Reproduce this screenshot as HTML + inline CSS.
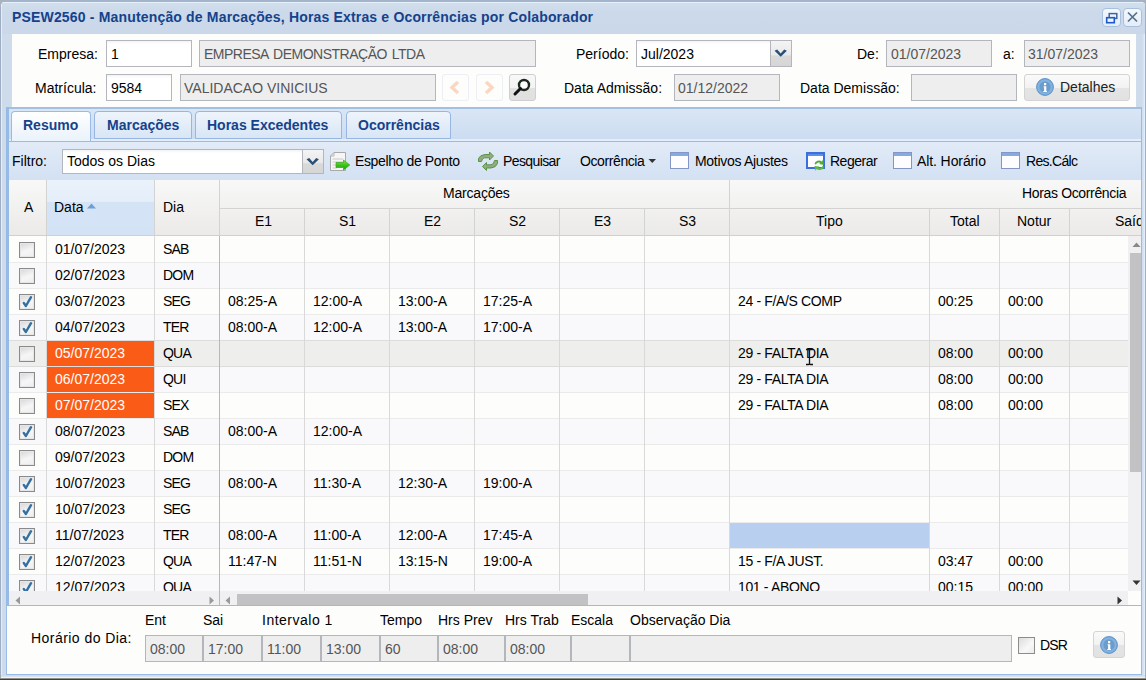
<!DOCTYPE html><html><head><meta charset="utf-8"><style>
html,body{margin:0;padding:0;}
body{width:1146px;height:680px;overflow:hidden;position:relative;background:#cedbeb;font-family:"Liberation Sans",sans-serif;font-size:14px;}
.t{position:absolute;line-height:16px;white-space:nowrap;}
.b{position:absolute;box-sizing:border-box;}
</style></head><body>
<div class="b" style="left:0px;top:0px;width:1146px;height:2px;background:#a3b4cb"></div>
<div class="b" style="left:0px;top:0px;width:1px;height:680px;background:#9fadc4"></div>
<div class="b" style="left:1145px;top:0px;width:1px;height:680px;background:#a0aec4"></div>
<div class="b" style="left:1px;top:2px;width:1144px;height:1px;background:#e4f1fc"></div>
<div class="b" style="left:1px;top:3px;width:1px;height:676px;background:#e4eefa"></div>
<div class="b" style="left:1142px;top:3px;width:3px;height:676px;background:linear-gradient(90deg,#cddcef,#d5e3f5,#e8f2fc)"></div>
<div class="b" style="left:0px;top:679px;width:1146px;height:1px;background:#6f7478"></div>
<svg style="position:absolute;left:0;top:0" width="7" height="7"><path d="M0 7 V0 H7 V1.5 H5 Q1.5 1.5 1.5 5 V7 Z" fill="#a9b3c0"/><path d="M1.5 7 V5 Q1.5 2.5 5 2.5 H7" fill="none" stroke="#e6f2fc" stroke-width="1"/></svg>
<svg style="position:absolute;left:1139px;top:0" width="7" height="7"><path d="M7 7 V0 H0 V1.5 H2 Q5.5 1.5 5.5 5 V7 Z" fill="#a9b3c0"/></svg>
<div class="b" style="left:2px;top:3px;width:1143px;height:31px;background:linear-gradient(#d2deec,#cbd9ea 30%,#cad8ea)"></div>
<div class="t" style="left:12px;top:9px;color:#15428b;font-weight:bold;letter-spacing:0.17px">PSEW2560 - Manutenção de Marcações, Horas Extras e Ocorrências por Colaborador</div>
<div class="b" style="left:1102px;top:8px;width:19px;height:19px;border:1px solid #a9c0dd;border-radius:4px;background:linear-gradient(#f4f8fd,#e3edf8)"></div>
<div class="b" style="left:1123px;top:8px;width:19px;height:19px;border:1px solid #a9c0dd;border-radius:4px;background:linear-gradient(#f4f8fd,#e3edf8)"></div>
<svg style="position:absolute;left:1102px;top:8px" width="19" height="19"><rect x="7.2" y="5.6" width="7.6" height="4.8" fill="none" stroke="#3a64a8" stroke-width="1.5"/><rect x="4.7" y="9.7" width="7.6" height="5" fill="#eef4fb" stroke="#1d5ac4" stroke-width="1.6"/></svg>
<svg style="position:absolute;left:1123px;top:8px" width="19" height="19"><path d="M5 4.5 L14 13.5 M14 4.5 L5 13.5" stroke="#52708c" stroke-width="1.7"/></svg>
<div class="b" style="left:12px;top:34px;width:1124px;height:73px;background:#fdfdfb"></div>
<div class="t" style="left:38px;top:46px;color:#000;font-weight:normal;">Empresa:</div>
<div class="b" style="left:106px;top:40px;width:86px;height:27px;border:1px solid #b4b6bd;background:linear-gradient(#f3f3f3 0,#fff 3px,#fff)"></div>
<div class="t" style="left:111px;top:46px;color:#000;font-weight:normal;">1</div>
<div class="b" style="left:199px;top:40px;width:337px;height:27px;border:1px solid #b4b6bd;background:#eeeeef"></div>
<div class="t" style="left:204px;top:46px;color:#555;font-weight:normal;letter-spacing:-0.5px;word-spacing:1.5px">EMPRESA DEMONSTRAÇÃO LTDA</div>
<div class="t" style="left:576px;top:46px;color:#000;font-weight:normal;">Período:</div>
<div class="b" style="left:636px;top:40px;width:156px;height:27px;border:1px solid #b4b6bd;background:linear-gradient(#f3f3f3 0,#fff 3px,#fff)"></div>
<div class="t" style="left:641px;top:46px;color:#000;font-weight:normal;">Jul/2023</div>
<div class="b" style="left:770px;top:41px;width:21px;height:25px;background:linear-gradient(#f4f4f4 0,#e9e9e9 55%,#d9d9d9 60%,#d6d6d6);border-left:1px solid #b4b6bd"></div>
<svg style="position:absolute;left:770px;top:41px" width="21" height="25"><path d="M4.5 9.8 L7.2 8.6 L10.7 12.4 L14.2 8.6 L16.9 9.8 L10.7 15.8 Z" fill="#2a4f78"/></svg>
<div class="t" style="left:857px;top:46px;color:#000;font-weight:normal;">De:</div>
<div class="b" style="left:886px;top:40px;width:106px;height:27px;border:1px solid #b4b6bd;background:#eeeeef"></div>
<div class="t" style="left:891px;top:46px;color:#555;font-weight:normal;">01/07/2023</div>
<div class="t" style="left:1003px;top:46px;color:#000;font-weight:normal;">a:</div>
<div class="b" style="left:1024px;top:40px;width:106px;height:27px;border:1px solid #b4b6bd;background:#eeeeef"></div>
<div class="t" style="left:1028px;top:46px;color:#555;font-weight:normal;">31/07/2023</div>
<div class="t" style="left:35px;top:80px;color:#000;font-weight:normal;">Matrícula:</div>
<div class="b" style="left:106px;top:74px;width:66px;height:27px;border:1px solid #b4b6bd;background:linear-gradient(#f3f3f3 0,#fff 3px,#fff)"></div>
<div class="t" style="left:111px;top:80px;color:#000;font-weight:normal;">9584</div>
<div class="b" style="left:180px;top:74px;width:256px;height:27px;border:1px solid #b4b6bd;background:#eeeeef"></div>
<div class="t" style="left:184px;top:80px;color:#555;font-weight:normal;">VALIDACAO VINICIUS</div>
<div class="b" style="left:442px;top:74px;width:27px;height:27px;border:1px solid #eceff3;border-radius:3px;background:#fdfdfb"></div>
<div class="b" style="left:476px;top:74px;width:27px;height:27px;border:1px solid #eceff3;border-radius:3px;background:#fdfdfb"></div>
<svg style="position:absolute;left:442px;top:74px" width="27" height="27"><path d="M16 8 L10 13.5 L16 19" fill="none" stroke="#fbd6c3" stroke-width="3.4"/></svg>
<svg style="position:absolute;left:476px;top:74px" width="27" height="27"><path d="M10 8 L16 13.5 L10 19" fill="none" stroke="#fbd6c3" stroke-width="3.4"/></svg>
<div class="b" style="left:509px;top:74px;width:27px;height:27px;border:1px solid #cfcfcf;border-radius:3px;background:linear-gradient(#f8f8f8 0,#f3f3f3 50%,#e2e2e2 50%,#e0e0e0)"></div>
<svg style="position:absolute;left:509px;top:74px" width="27" height="27"><circle cx="15" cy="11" r="5" fill="#fff" stroke="#1e2a1e" stroke-width="2.4"/><path d="M11.5 14.5 L6 20" stroke="#111" stroke-width="3" stroke-linecap="round"/></svg>
<div class="t" style="left:564px;top:80px;color:#000;font-weight:normal;">Data Admissão:</div>
<div class="b" style="left:674px;top:74px;width:106px;height:27px;border:1px solid #b4b6bd;background:#eeeeef"></div>
<div class="t" style="left:678px;top:80px;color:#555;font-weight:normal;">01/12/2022</div>
<div class="t" style="left:800px;top:80px;color:#000;font-weight:normal;">Data Demissão:</div>
<div class="b" style="left:911px;top:74px;width:106px;height:27px;border:1px solid #b4b6bd;background:#eeeeef"></div>
<div class="b" style="left:1024px;top:74px;width:106px;height:27px;border:1px solid #d4d4d4;border-radius:3px;background:linear-gradient(#fafafa 0,#f2f2f2 50%,#e4e4e4 50%,#e2e2e2)"></div>
<svg style="position:absolute;left:1036px;top:78px" width="18" height="18"><circle cx="9" cy="9" r="8.4" fill="#7fb0e0" stroke="#5a8fc8" stroke-width="1"/><circle cx="9" cy="9" r="6.2" fill="#6b9ccc" stroke="#8dbbe6" stroke-width="0.8"/><path d="M8 5 H10.2 V7.2 H8 Z M7.6 8.3 H10.3 V13 H11 V14 H7.3 V13 H8.1 V9.3 H7.6 Z" fill="#fff"/></svg>
<div class="t" style="left:1060px;top:79px;color:#222;font-weight:normal;">Detalhes</div>
<div class="b" style="left:6px;top:107px;width:1136px;height:568px;background:#fdfdfb"></div>
<div class="b" style="left:6px;top:107px;width:1136px;height:2px;background:#a3bfe2"></div>
<div class="b" style="left:6px;top:109px;width:1136px;height:30px;background:linear-gradient(#d9e6f5,#ccdcf1)"></div>
<div class="b" style="left:6px;top:139px;width:1136px;height:2px;background:#e2eefb"></div>
<div class="b" style="left:6px;top:141px;width:1136px;height:1px;background:#99bbe8"></div>
<div class="b" style="left:11px;top:111px;width:80px;height:30px;border:1px solid #99bbe8;border-bottom:none;border-radius:4px 4px 0 0;background:linear-gradient(#ffffff,#eaf2fb)"></div>
<div class="t" style="left:23px;top:117px;color:#15428b;font-weight:bold;">Resumo</div>
<div class="b" style="left:94px;top:111px;width:98px;height:28px;border:1px solid #97b7e2;border-radius:4px 4px 0 0;background:linear-gradient(#eef4fb,#d9e6f6)"></div>
<div class="t" style="left:107px;top:117px;color:#15428b;font-weight:bold;">Marcações</div>
<div class="b" style="left:195px;top:111px;width:147px;height:28px;border:1px solid #97b7e2;border-radius:4px 4px 0 0;background:linear-gradient(#eef4fb,#d9e6f6)"></div>
<div class="t" style="left:207px;top:117px;color:#15428b;font-weight:bold;">Horas Excedentes</div>
<div class="b" style="left:346px;top:111px;width:105px;height:28px;border:1px solid #97b7e2;border-radius:4px 4px 0 0;background:linear-gradient(#eef4fb,#d9e6f6)"></div>
<div class="t" style="left:358px;top:117px;color:#15428b;font-weight:bold;">Ocorrências</div>
<div class="b" style="left:6px;top:142px;width:1136px;height:38px;background:linear-gradient(#e2ebf7,#d3e1f3)"></div>
<div class="t" style="left:12px;top:153px;color:#000;font-weight:normal;">Filtro:</div>
<div class="b" style="left:62px;top:149px;width:262px;height:25px;border:1px solid #b4b6bd;background:linear-gradient(#f3f3f3 0,#fff 3px,#fff)"></div>
<div class="t" style="left:67px;top:153px;color:#000;font-weight:normal;">Todos os Dias</div>
<div class="b" style="left:302px;top:150px;width:21px;height:23px;background:linear-gradient(#f4f4f4 0,#e9e9e9 55%,#d9d9d9 60%,#d6d6d6);border-left:1px solid #b4b6bd"></div>
<svg style="position:absolute;left:302px;top:150px" width="21" height="23"><path d="M4.5 9.3 L7.2 8.1 L10.7 11.9 L14.2 8.1 L16.9 9.3 L10.7 15.3 Z" fill="#2a4f78"/></svg>
<svg style="position:absolute;left:329px;top:151px" width="22" height="22"><defs><linearGradient id="ga" x1="0" y1="0" x2="0" y2="1"><stop offset="0" stop-color="#9be63a"/><stop offset="0.5" stop-color="#3cc21a"/><stop offset="1" stop-color="#18a80c"/></linearGradient></defs><path d="M1.5 5 L5 1.5 H16.5 V19.5 H1.5 Z" fill="#f6f6f6" stroke="#a9a9a9"/><path d="M1.5 5 H5 V1.5" fill="none" stroke="#b5b5b5"/><path d="M3.5 8 H14 M3.5 11 H14 M3.5 14 H8 M3.5 17 H8" stroke="#c9c9c9"/><path d="M7 11.5 H14.5 V9 L20.8 14 L14.5 19 V16.5 H7 Z" fill="url(#ga)" stroke="#35a020" stroke-width="0.7"/></svg>
<div class="t" style="left:355px;top:153px;color:#000;font-weight:normal;letter-spacing:-0.37px">Espelho de Ponto</div>
<svg style="position:absolute;left:472px;top:148px" width="28" height="26"><path d="M6.5 13.5 L6.5 10.5 Q8 7 13 6.5 L17.5 6.5 L17.5 4 L21.5 8 L17.5 12 L17.5 9.8 L12.5 9.8 Q10 10 9.5 13.5 Z" fill="#93ab82" stroke="#4e8f3a" stroke-width="0.9"/><path d="M25.5 12.5 L25.5 15.5 Q24 19.5 19 20 L14.5 20 L14.5 22.5 L10.5 18.5 L14.5 14.5 L14.5 16.8 L19 16.8 Q22 16.5 22.5 12.5 Z" fill="#93ab82" stroke="#4e8f3a" stroke-width="0.9"/></svg>
<div class="t" style="left:503px;top:153px;color:#000;font-weight:normal;letter-spacing:-0.6px">Pesquisar</div>
<div class="t" style="left:580px;top:153px;color:#000;font-weight:normal;letter-spacing:-0.4px">Ocorrência</div>
<svg style="position:absolute;left:648px;top:158px" width="9" height="6"><path d="M0.5 1 L8 1 L4.25 5 Z" fill="#333"/></svg>
<svg style="position:absolute;left:670px;top:152px" width="19" height="17"><rect x="0.5" y="0.5" width="18" height="16" fill="#fdfdff" stroke="#8495c6"/><rect x="1" y="1" width="17" height="3" fill="#85ace2"/></svg>
<div class="t" style="left:695px;top:153px;color:#000;font-weight:normal;letter-spacing:-0.3px">Motivos Ajustes</div>
<svg style="position:absolute;left:806px;top:152px" width="20" height="19"><rect x="1" y="1" width="17" height="15" fill="#fdfdff" stroke="#3d6fdc" stroke-width="2"/><rect x="2" y="2" width="15" height="2" fill="#5d8fe6"/><path d="M8.5 12 A4.5 4 0 0 1 16 9.5 L17 7.5 L18 13 L13 12 L14.5 11 A3 2.5 0 0 0 10 12.5 Z" fill="#4fae3c"/><path d="M18 14.5 A4.5 4 0 0 1 10.5 17 L9.5 19 L8.5 14 L13.5 14.5 L12 15.5 A3 2.5 0 0 0 16.5 14 Z" fill="#5cba48"/></svg>
<div class="t" style="left:830px;top:153px;color:#000;font-weight:normal;letter-spacing:-0.5px">Regerar</div>
<svg style="position:absolute;left:893px;top:152px" width="19" height="17"><rect x="0.5" y="0.5" width="18" height="16" fill="#fdfdff" stroke="#8495c6"/><rect x="1" y="1" width="17" height="3" fill="#85ace2"/></svg>
<div class="t" style="left:917px;top:153px;color:#000;font-weight:normal;letter-spacing:-0.1px">Alt. Horário</div>
<svg style="position:absolute;left:1001px;top:152px" width="19" height="17"><rect x="0.5" y="0.5" width="18" height="16" fill="#fdfdff" stroke="#8495c6"/><rect x="1" y="1" width="17" height="3" fill="#85ace2"/></svg>
<div class="t" style="left:1026px;top:153px;color:#000;font-weight:normal;letter-spacing:-0.7px">Res.Cálc</div>
<div class="b" style="left:6px;top:107px;width:3px;height:498px;background:#95bae6"></div>
<div class="b" style="left:1141px;top:107px;width:1px;height:568px;background:#99bbe8"></div>
<div class="b" style="left:9px;top:180px;width:1132px;height:56px;background:linear-gradient(#f8f8f8,#ebeae8)"></div>
<div class="b" style="left:46px;top:180px;width:108px;height:56px;background:linear-gradient(#eaf2fb 0,#e4eef9 40%,#d5e4f5 40%,#d3e3f5)"></div>
<div class="b" style="left:9px;top:235px;width:1132px;height:1px;background:#d0d0d0"></div>
<div class="b" style="left:46px;top:180px;width:1px;height:55px;background:#d3d3d3"></div>
<div class="b" style="left:154px;top:180px;width:1px;height:55px;background:#d3d3d3"></div>
<div class="b" style="left:219px;top:180px;width:1px;height:56px;background:#d3d3d3"></div>
<div class="b" style="left:219px;top:208px;width:922px;height:1px;background:#d3d3d3"></div>
<div class="b" style="left:729px;top:180px;width:1px;height:55px;background:#d3d3d3"></div>
<div class="b" style="left:304px;top:208px;width:1px;height:27px;background:#d3d3d3"></div>
<div class="b" style="left:389px;top:208px;width:1px;height:27px;background:#d3d3d3"></div>
<div class="b" style="left:474px;top:208px;width:1px;height:27px;background:#d3d3d3"></div>
<div class="b" style="left:559px;top:208px;width:1px;height:27px;background:#d3d3d3"></div>
<div class="b" style="left:644px;top:208px;width:1px;height:27px;background:#d3d3d3"></div>
<div class="b" style="left:929px;top:208px;width:1px;height:27px;background:#d3d3d3"></div>
<div class="b" style="left:999px;top:208px;width:1px;height:27px;background:#d3d3d3"></div>
<div class="b" style="left:1069px;top:208px;width:1px;height:27px;background:#d3d3d3"></div>
<div class="t" style="left:24px;top:199px;color:#000;font-weight:normal;">A</div>
<div class="t" style="left:54px;top:199px;color:#000;font-weight:normal;">Data</div>
<div class="t" style="left:163px;top:199px;color:#000;font-weight:normal;">Dia</div>
<svg style="position:absolute;left:87px;top:203px" width="10" height="6"><path d="M0 5.5 L4.5 0.5 L9 5.5 Z" fill="#6f9fd7"/></svg>
<div class="t" style="left:443px;top:185px;color:#000;font-weight:normal;letter-spacing:-0.2px">Marcações</div>
<div class="t" style="left:1022px;top:185px;color:#000;font-weight:normal;letter-spacing:-0.35px">Horas Ocorrência</div>
<div class="t" style="left:255px;top:213px;color:#000;font-weight:normal;">E1</div>
<div class="t" style="left:339px;top:213px;color:#000;font-weight:normal;">S1</div>
<div class="t" style="left:424px;top:213px;color:#000;font-weight:normal;">E2</div>
<div class="t" style="left:509px;top:213px;color:#000;font-weight:normal;">S2</div>
<div class="t" style="left:594px;top:213px;color:#000;font-weight:normal;">E3</div>
<div class="t" style="left:679px;top:213px;color:#000;font-weight:normal;">S3</div>
<div class="t" style="left:816px;top:213px;color:#000;font-weight:normal;">Tipo</div>
<div class="t" style="left:950px;top:213px;color:#000;font-weight:normal;">Total</div>
<div class="t" style="left:1017px;top:213px;color:#000;font-weight:normal;">Notur</div>
<div class="t" style="left:1115px;top:213px;color:#000;font-weight:normal;width:26px;overflow:hidden">Saíd</div>
<div class="b" style="left:9px;top:236px;width:1119px;height:355px;overflow:hidden">
<div class="b" style="left:0px;top:1px;width:1119px;height:26px;background:#fdfdfb"></div>
<div class="b" style="left:0px;top:26px;width:1119px;height:1px;background:#ebebeb"></div>
<div class="b" style="left:10px;top:6px;width:16px;height:16px;border:1px solid #8a8a8a;box-shadow:inset 0 0 0 1px #e6e6e6;background:linear-gradient(160deg,#d6d6da,#f6f6f6 55%,#ededed)"></div>
<div class="t" style="left:46px;top:5px;color:#000;">01/07/2023</div>
<div class="t" style="left:154px;top:5px;color:#000;letter-spacing:-0.8px">SAB</div>
<div class="b" style="left:0px;top:27px;width:1119px;height:26px;background:#f9f9fb"></div>
<div class="b" style="left:0px;top:52px;width:1119px;height:1px;background:#ebebeb"></div>
<div class="b" style="left:10px;top:32px;width:16px;height:16px;border:1px solid #8a8a8a;box-shadow:inset 0 0 0 1px #e6e6e6;background:linear-gradient(160deg,#d6d6da,#f6f6f6 55%,#ededed)"></div>
<div class="t" style="left:46px;top:31px;color:#000;">02/07/2023</div>
<div class="t" style="left:154px;top:31px;color:#000;letter-spacing:-0.8px">DOM</div>
<div class="b" style="left:0px;top:53px;width:1119px;height:26px;background:#fdfdfb"></div>
<div class="b" style="left:0px;top:78px;width:1119px;height:1px;background:#ebebeb"></div>
<div class="b" style="left:10px;top:58px;width:16px;height:16px;border:1px solid #8a8a8a;box-shadow:inset 0 0 0 1px #e6e6e6;background:linear-gradient(160deg,#d6d6da,#f6f6f6 55%,#ededed)"></div>
<svg style="position:absolute;left:10px;top:58px" width="16" height="16"><path d="M4.8 9 L6.9 12 L12 3.2" fill="none" stroke="#3570a3" stroke-width="2.4" stroke-linecap="round" stroke-linejoin="round"/></svg>
<div class="t" style="left:46px;top:57px;color:#000;">03/07/2023</div>
<div class="t" style="left:154px;top:57px;color:#000;letter-spacing:-0.8px">SEG</div>
<div class="t" style="left:219px;top:57px;color:#000;">08:25-A</div>
<div class="t" style="left:304px;top:57px;color:#000;">12:00-A</div>
<div class="t" style="left:389px;top:57px;color:#000;">13:00-A</div>
<div class="t" style="left:474px;top:57px;color:#000;">17:25-A</div>
<div class="t" style="left:729px;top:57px;color:#000;letter-spacing:-0.35px">24 - F/A/S COMP</div>
<div class="t" style="left:929px;top:57px;color:#000;">00:25</div>
<div class="t" style="left:999px;top:57px;color:#000;">00:00</div>
<div class="b" style="left:0px;top:79px;width:1119px;height:26px;background:#f9f9fb"></div>
<div class="b" style="left:0px;top:104px;width:1119px;height:1px;background:#ebebeb"></div>
<div class="b" style="left:10px;top:84px;width:16px;height:16px;border:1px solid #8a8a8a;box-shadow:inset 0 0 0 1px #e6e6e6;background:linear-gradient(160deg,#d6d6da,#f6f6f6 55%,#ededed)"></div>
<svg style="position:absolute;left:10px;top:84px" width="16" height="16"><path d="M4.8 9 L6.9 12 L12 3.2" fill="none" stroke="#3570a3" stroke-width="2.4" stroke-linecap="round" stroke-linejoin="round"/></svg>
<div class="t" style="left:46px;top:83px;color:#000;">04/07/2023</div>
<div class="t" style="left:154px;top:83px;color:#000;letter-spacing:-0.8px">TER</div>
<div class="t" style="left:219px;top:83px;color:#000;">08:00-A</div>
<div class="t" style="left:304px;top:83px;color:#000;">12:00-A</div>
<div class="t" style="left:389px;top:83px;color:#000;">13:00-A</div>
<div class="t" style="left:474px;top:83px;color:#000;">17:00-A</div>
<div class="b" style="left:0px;top:105px;width:1119px;height:26px;background:#eeeeec"></div>
<div class="b" style="left:0px;top:130px;width:1119px;height:1px;background:#ebebeb"></div>
<div class="b" style="left:0px;top:104px;width:1119px;height:1px;background:#dcdcdc"></div>
<div class="b" style="left:0px;top:130px;width:1119px;height:1px;background:#dcdcdc"></div>
<div class="b" style="left:38px;top:105px;width:107px;height:25px;background:#fa5b16"></div>
<div class="b" style="left:10px;top:110px;width:16px;height:16px;border:1px solid #8a8a8a;box-shadow:inset 0 0 0 1px #e6e6e6;background:linear-gradient(160deg,#d6d6da,#f6f6f6 55%,#ededed)"></div>
<div class="t" style="left:46px;top:109px;color:#fff;">05/07/2023</div>
<div class="t" style="left:154px;top:109px;color:#000;letter-spacing:-0.8px">QUA</div>
<div class="t" style="left:729px;top:109px;color:#000;letter-spacing:-0.35px">29 - FALTA DIA</div>
<div class="t" style="left:929px;top:109px;color:#000;">08:00</div>
<div class="t" style="left:999px;top:109px;color:#000;">00:00</div>
<div class="b" style="left:0px;top:131px;width:1119px;height:26px;background:#f9f9fb"></div>
<div class="b" style="left:0px;top:156px;width:1119px;height:1px;background:#ebebeb"></div>
<div class="b" style="left:38px;top:131px;width:107px;height:25px;background:#fa5b16"></div>
<div class="b" style="left:10px;top:136px;width:16px;height:16px;border:1px solid #8a8a8a;box-shadow:inset 0 0 0 1px #e6e6e6;background:linear-gradient(160deg,#d6d6da,#f6f6f6 55%,#ededed)"></div>
<div class="t" style="left:46px;top:135px;color:#fff;">06/07/2023</div>
<div class="t" style="left:154px;top:135px;color:#000;letter-spacing:-0.8px">QUI</div>
<div class="t" style="left:729px;top:135px;color:#000;letter-spacing:-0.35px">29 - FALTA DIA</div>
<div class="t" style="left:929px;top:135px;color:#000;">08:00</div>
<div class="t" style="left:999px;top:135px;color:#000;">00:00</div>
<div class="b" style="left:0px;top:157px;width:1119px;height:26px;background:#fdfdfb"></div>
<div class="b" style="left:0px;top:182px;width:1119px;height:1px;background:#ebebeb"></div>
<div class="b" style="left:38px;top:157px;width:107px;height:25px;background:#fa5b16"></div>
<div class="b" style="left:10px;top:162px;width:16px;height:16px;border:1px solid #8a8a8a;box-shadow:inset 0 0 0 1px #e6e6e6;background:linear-gradient(160deg,#d6d6da,#f6f6f6 55%,#ededed)"></div>
<div class="t" style="left:46px;top:161px;color:#fff;">07/07/2023</div>
<div class="t" style="left:154px;top:161px;color:#000;letter-spacing:-0.8px">SEX</div>
<div class="t" style="left:729px;top:161px;color:#000;letter-spacing:-0.35px">29 - FALTA DIA</div>
<div class="t" style="left:929px;top:161px;color:#000;">08:00</div>
<div class="t" style="left:999px;top:161px;color:#000;">00:00</div>
<div class="b" style="left:0px;top:183px;width:1119px;height:26px;background:#f9f9fb"></div>
<div class="b" style="left:0px;top:208px;width:1119px;height:1px;background:#ebebeb"></div>
<div class="b" style="left:10px;top:188px;width:16px;height:16px;border:1px solid #8a8a8a;box-shadow:inset 0 0 0 1px #e6e6e6;background:linear-gradient(160deg,#d6d6da,#f6f6f6 55%,#ededed)"></div>
<svg style="position:absolute;left:10px;top:188px" width="16" height="16"><path d="M4.8 9 L6.9 12 L12 3.2" fill="none" stroke="#3570a3" stroke-width="2.4" stroke-linecap="round" stroke-linejoin="round"/></svg>
<div class="t" style="left:46px;top:187px;color:#000;">08/07/2023</div>
<div class="t" style="left:154px;top:187px;color:#000;letter-spacing:-0.8px">SAB</div>
<div class="t" style="left:219px;top:187px;color:#000;">08:00-A</div>
<div class="t" style="left:304px;top:187px;color:#000;">12:00-A</div>
<div class="b" style="left:0px;top:209px;width:1119px;height:26px;background:#fdfdfb"></div>
<div class="b" style="left:0px;top:234px;width:1119px;height:1px;background:#ebebeb"></div>
<div class="b" style="left:10px;top:214px;width:16px;height:16px;border:1px solid #8a8a8a;box-shadow:inset 0 0 0 1px #e6e6e6;background:linear-gradient(160deg,#d6d6da,#f6f6f6 55%,#ededed)"></div>
<div class="t" style="left:46px;top:213px;color:#000;">09/07/2023</div>
<div class="t" style="left:154px;top:213px;color:#000;letter-spacing:-0.8px">DOM</div>
<div class="b" style="left:0px;top:235px;width:1119px;height:26px;background:#f9f9fb"></div>
<div class="b" style="left:0px;top:260px;width:1119px;height:1px;background:#ebebeb"></div>
<div class="b" style="left:10px;top:240px;width:16px;height:16px;border:1px solid #8a8a8a;box-shadow:inset 0 0 0 1px #e6e6e6;background:linear-gradient(160deg,#d6d6da,#f6f6f6 55%,#ededed)"></div>
<svg style="position:absolute;left:10px;top:240px" width="16" height="16"><path d="M4.8 9 L6.9 12 L12 3.2" fill="none" stroke="#3570a3" stroke-width="2.4" stroke-linecap="round" stroke-linejoin="round"/></svg>
<div class="t" style="left:46px;top:239px;color:#000;">10/07/2023</div>
<div class="t" style="left:154px;top:239px;color:#000;letter-spacing:-0.8px">SEG</div>
<div class="t" style="left:219px;top:239px;color:#000;">08:00-A</div>
<div class="t" style="left:304px;top:239px;color:#000;">11:30-A</div>
<div class="t" style="left:389px;top:239px;color:#000;">12:30-A</div>
<div class="t" style="left:474px;top:239px;color:#000;">19:00-A</div>
<div class="b" style="left:0px;top:261px;width:1119px;height:26px;background:#fdfdfb"></div>
<div class="b" style="left:0px;top:286px;width:1119px;height:1px;background:#ebebeb"></div>
<div class="b" style="left:10px;top:266px;width:16px;height:16px;border:1px solid #8a8a8a;box-shadow:inset 0 0 0 1px #e6e6e6;background:linear-gradient(160deg,#d6d6da,#f6f6f6 55%,#ededed)"></div>
<svg style="position:absolute;left:10px;top:266px" width="16" height="16"><path d="M4.8 9 L6.9 12 L12 3.2" fill="none" stroke="#3570a3" stroke-width="2.4" stroke-linecap="round" stroke-linejoin="round"/></svg>
<div class="t" style="left:46px;top:265px;color:#000;">10/07/2023</div>
<div class="t" style="left:154px;top:265px;color:#000;letter-spacing:-0.8px">SEG</div>
<div class="b" style="left:0px;top:287px;width:1119px;height:26px;background:#f9f9fb"></div>
<div class="b" style="left:0px;top:312px;width:1119px;height:1px;background:#ebebeb"></div>
<div class="b" style="left:721px;top:287px;width:199px;height:25px;background:#b8cff0"></div>
<div class="b" style="left:10px;top:292px;width:16px;height:16px;border:1px solid #8a8a8a;box-shadow:inset 0 0 0 1px #e6e6e6;background:linear-gradient(160deg,#d6d6da,#f6f6f6 55%,#ededed)"></div>
<svg style="position:absolute;left:10px;top:292px" width="16" height="16"><path d="M4.8 9 L6.9 12 L12 3.2" fill="none" stroke="#3570a3" stroke-width="2.4" stroke-linecap="round" stroke-linejoin="round"/></svg>
<div class="t" style="left:46px;top:291px;color:#000;">11/07/2023</div>
<div class="t" style="left:154px;top:291px;color:#000;letter-spacing:-0.8px">TER</div>
<div class="t" style="left:219px;top:291px;color:#000;">08:00-A</div>
<div class="t" style="left:304px;top:291px;color:#000;">11:00-A</div>
<div class="t" style="left:389px;top:291px;color:#000;">12:00-A</div>
<div class="t" style="left:474px;top:291px;color:#000;">17:45-A</div>
<div class="b" style="left:0px;top:313px;width:1119px;height:26px;background:#fdfdfb"></div>
<div class="b" style="left:0px;top:338px;width:1119px;height:1px;background:#ebebeb"></div>
<div class="b" style="left:10px;top:318px;width:16px;height:16px;border:1px solid #8a8a8a;box-shadow:inset 0 0 0 1px #e6e6e6;background:linear-gradient(160deg,#d6d6da,#f6f6f6 55%,#ededed)"></div>
<svg style="position:absolute;left:10px;top:318px" width="16" height="16"><path d="M4.8 9 L6.9 12 L12 3.2" fill="none" stroke="#3570a3" stroke-width="2.4" stroke-linecap="round" stroke-linejoin="round"/></svg>
<div class="t" style="left:46px;top:317px;color:#000;">12/07/2023</div>
<div class="t" style="left:154px;top:317px;color:#000;letter-spacing:-0.8px">QUA</div>
<div class="t" style="left:219px;top:317px;color:#000;">11:47-N</div>
<div class="t" style="left:304px;top:317px;color:#000;">11:51-N</div>
<div class="t" style="left:389px;top:317px;color:#000;">13:15-N</div>
<div class="t" style="left:474px;top:317px;color:#000;">19:00-A</div>
<div class="t" style="left:729px;top:317px;color:#000;letter-spacing:-0.35px">15 - F/A JUST.</div>
<div class="t" style="left:929px;top:317px;color:#000;">03:47</div>
<div class="t" style="left:999px;top:317px;color:#000;">00:00</div>
<div class="b" style="left:0px;top:339px;width:1119px;height:26px;background:#f9f9fb"></div>
<div class="b" style="left:0px;top:364px;width:1119px;height:1px;background:#ebebeb"></div>
<div class="b" style="left:10px;top:344px;width:16px;height:16px;border:1px solid #8a8a8a;box-shadow:inset 0 0 0 1px #e6e6e6;background:linear-gradient(160deg,#d6d6da,#f6f6f6 55%,#ededed)"></div>
<svg style="position:absolute;left:10px;top:344px" width="16" height="16"><path d="M4.8 9 L6.9 12 L12 3.2" fill="none" stroke="#3570a3" stroke-width="2.4" stroke-linecap="round" stroke-linejoin="round"/></svg>
<div class="t" style="left:46px;top:343px;color:#000;">12/07/2023</div>
<div class="t" style="left:154px;top:343px;color:#000;letter-spacing:-0.8px">QUA</div>
<div class="t" style="left:729px;top:343px;color:#000;letter-spacing:-0.35px">101 - ABONO</div>
<div class="t" style="left:929px;top:343px;color:#000;">00:15</div>
<div class="t" style="left:999px;top:343px;color:#000;">00:00</div>
<div class="b" style="left:37px;top:0px;width:1px;height:355px;background:#d9d9d9"></div>
<div class="b" style="left:145px;top:0px;width:1px;height:355px;background:#d9d9d9"></div>
<div class="b" style="left:210px;top:0px;width:1px;height:355px;background:#9dbde6"></div>
<div class="b" style="left:295px;top:0px;width:1px;height:355px;background:#d9d9d9"></div>
<div class="b" style="left:380px;top:0px;width:1px;height:355px;background:#d9d9d9"></div>
<div class="b" style="left:465px;top:0px;width:1px;height:355px;background:#d9d9d9"></div>
<div class="b" style="left:550px;top:0px;width:1px;height:355px;background:#d9d9d9"></div>
<div class="b" style="left:635px;top:0px;width:1px;height:355px;background:#d9d9d9"></div>
<div class="b" style="left:720px;top:0px;width:1px;height:355px;background:#d9d9d9"></div>
<div class="b" style="left:920px;top:0px;width:1px;height:355px;background:#d9d9d9"></div>
<div class="b" style="left:990px;top:0px;width:1px;height:355px;background:#d9d9d9"></div>
<div class="b" style="left:1060px;top:0px;width:1px;height:355px;background:#d9d9d9"></div>
</div>
<svg style="position:absolute;left:804px;top:347px" width="12" height="20"><path d="M2 2.5 H4.5 Q5.5 2.5 5.5 3.5 V16.5 Q5.5 17.5 4.5 17.5 H2 M9 2.5 H6.5 Q5.5 2.5 5.5 3.5 M5.5 16.5 Q5.5 17.5 6.5 17.5 H9" fill="none" stroke="#111" stroke-width="1.3"/></svg>
<div class="b" style="left:1128px;top:236px;width:13px;height:355px;background:#f0f0f2"></div>
<div class="b" style="left:1130px;top:253px;width:11px;height:219px;background:#c2c2c4"></div>
<svg style="position:absolute;left:1132px;top:242px" width="9" height="6"><path d="M0.5 5 L4.5 0.5 L8.5 5 Z" fill="#888"/></svg>
<svg style="position:absolute;left:1132px;top:580px" width="9" height="6"><path d="M0.5 0.5 L4.5 5 L8.5 0.5 Z" fill="#333"/></svg>
<div class="b" style="left:9px;top:591px;width:1132px;height:14px;background:#f0f0f2"></div>
<div class="b" style="left:220px;top:591px;width:921px;height:14px;background:#f0f0f2"></div>
<div class="b" style="left:219px;top:591px;width:1px;height:14px;background:#9dbde6"></div>
<div class="b" style="left:1128px;top:591px;width:13px;height:14px;background:#fdfdfb"></div>
<div class="b" style="left:237px;top:594px;width:351px;height:11px;background:#c2c2c4"></div>
<svg style="position:absolute;left:15px;top:596px" width="6" height="9"><path d="M5 0.5 L0.5 4.5 L5 8.5 Z" fill="#999"/></svg>
<svg style="position:absolute;left:209px;top:596px" width="6" height="9"><path d="M0.5 0.5 L5 4.5 L0.5 8.5 Z" fill="#999"/></svg>
<svg style="position:absolute;left:225px;top:596px" width="6" height="9"><path d="M5 0.5 L0.5 4.5 L5 8.5 Z" fill="#999"/></svg>
<svg style="position:absolute;left:1117px;top:596px" width="6" height="9"><path d="M0.5 0.5 L5 4.5 L0.5 8.5 Z" fill="#333"/></svg>
<div class="b" style="left:6px;top:605px;width:1136px;height:1px;background:#99bbe8"></div>
<div class="b" style="left:7px;top:606px;width:1134px;height:68px;background:#fdfdfb"></div>
<div class="b" style="left:6px;top:605px;width:1px;height:70px;background:#99bbe8"></div>
<div class="b" style="left:6px;top:674px;width:1136px;height:1px;background:#99bbe8"></div>
<div class="b" style="left:1px;top:675px;width:1144px;height:1px;background:#bde3f7"></div>
<div class="b" style="left:1px;top:676px;width:1144px;height:1px;background:#dde2ea"></div>
<div class="b" style="left:1px;top:677px;width:1144px;height:1px;background:#edf3fb"></div>
<div class="b" style="left:0px;top:678px;width:1146px;height:1px;background:#8f928c"></div>
<div class="b" style="left:0px;top:679px;width:1146px;height:1px;background:#3d4530"></div>
<div class="t" style="left:31px;top:630px;color:#000;font-weight:normal;letter-spacing:0.45px">Horário do Dia:</div>
<div class="t" style="left:145px;top:612px;color:#000;font-weight:normal;">Ent</div>
<div class="t" style="left:203px;top:612px;color:#000;font-weight:normal;">Sai</div>
<div class="t" style="left:262px;top:612px;color:#000;font-weight:normal;letter-spacing:0.5px">Intervalo 1</div>
<div class="t" style="left:380px;top:612px;color:#000;font-weight:normal;">Tempo</div>
<div class="t" style="left:438px;top:612px;color:#000;font-weight:normal;">Hrs Prev</div>
<div class="t" style="left:505px;top:612px;color:#000;font-weight:normal;">Hrs Trab</div>
<div class="t" style="left:571px;top:612px;color:#000;font-weight:normal;">Escala</div>
<div class="t" style="left:630px;top:612px;color:#000;font-weight:normal;">Observação Dia</div>
<div class="b" style="left:145px;top:635px;width:58px;height:27px;border:1px solid #b4b6bd;background:#eeeeef"></div>
<div class="t" style="left:150px;top:641px;color:#555;font-weight:normal;">08:00</div>
<div class="b" style="left:203px;top:635px;width:59px;height:27px;border:1px solid #b4b6bd;background:#eeeeef"></div>
<div class="t" style="left:208px;top:641px;color:#555;font-weight:normal;">17:00</div>
<div class="b" style="left:262px;top:635px;width:59px;height:27px;border:1px solid #b4b6bd;background:#eeeeef"></div>
<div class="t" style="left:267px;top:641px;color:#555;font-weight:normal;">11:00</div>
<div class="b" style="left:321px;top:635px;width:59px;height:27px;border:1px solid #b4b6bd;background:#eeeeef"></div>
<div class="t" style="left:326px;top:641px;color:#555;font-weight:normal;">13:00</div>
<div class="b" style="left:380px;top:635px;width:58px;height:27px;border:1px solid #b4b6bd;background:#eeeeef"></div>
<div class="t" style="left:385px;top:641px;color:#555;font-weight:normal;">60</div>
<div class="b" style="left:438px;top:635px;width:67px;height:27px;border:1px solid #b4b6bd;background:#eeeeef"></div>
<div class="t" style="left:443px;top:641px;color:#555;font-weight:normal;">08:00</div>
<div class="b" style="left:505px;top:635px;width:66px;height:27px;border:1px solid #b4b6bd;background:#eeeeef"></div>
<div class="t" style="left:510px;top:641px;color:#555;font-weight:normal;">08:00</div>
<div class="b" style="left:571px;top:635px;width:59px;height:27px;border:1px solid #b4b6bd;background:#eeeeef"></div>
<div class="b" style="left:630px;top:635px;width:382px;height:27px;border:1px solid #b4b6bd;background:#eeeeef"></div>
<div class="b" style="left:1018px;top:637px;width:17px;height:17px;border:1px solid #8c8c8c;background:linear-gradient(135deg,#dcdcdc,#f8f8f8 60%,#ececec)"></div>
<div class="t" style="left:1040px;top:637px;color:#000;font-weight:normal;letter-spacing:-0.8px">DSR</div>
<div class="b" style="left:1093px;top:631px;width:32px;height:27px;border:1px solid #d4d4d4;border-radius:3px;background:linear-gradient(#fafafa 0,#f2f2f2 50%,#e4e4e4 50%,#e2e2e2)"></div>
<svg style="position:absolute;left:1100px;top:636px" width="18" height="18"><circle cx="9" cy="9" r="8.4" fill="#7fb0e0" stroke="#5a8fc8" stroke-width="1"/><circle cx="9" cy="9" r="6.2" fill="#6b9ccc" stroke="#8dbbe6" stroke-width="0.8"/><path d="M8 5 H10.2 V7.2 H8 Z M7.6 8.3 H10.3 V13 H11 V14 H7.3 V13 H8.1 V9.3 H7.6 Z" fill="#fff"/></svg>
</body></html>
